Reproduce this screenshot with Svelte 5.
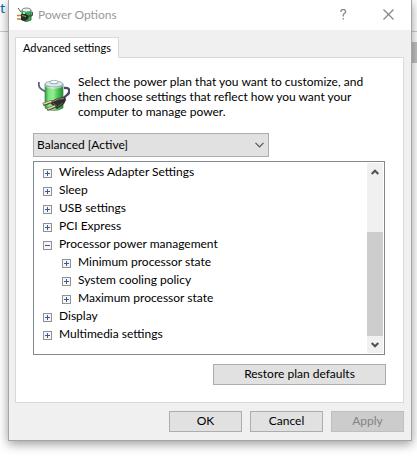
<script>
  let plan = "balanced"

  let settings = [
    { id: 0, text: "Wireless Adapter Settings", open: false, children: [] },
    { id: 1, text: "Sleep", open: false, children: [] },
    { id: 2, text: "USB settings", open: false, children: [] },
    { id: 3, text: "PCI Express", open: false, children: [] },
    { id: 4, text: "Processor power management", open: true, children: [
      "Minimum processor state",
      "System cooling policy",
      "Maximum processor state"
    ] },
    { id: 5, text: "Display", open: false, children: [] },
    { id: 6, text: "Multimedia settings", open: false, children: [] }
  ]

  const toggle = id => {
    settings = settings.map(item => item.id === id ? {...item, open: !item.open} : item)
  }
</script>

<div class="desktop">
  <div class="behind">
    <div class="behind-top"><a href="#settings">t s</a></div>
    <div class="behind-scroll"></div>
  </div>

  <div class="dialog" role="dialog" aria-labelledby="title">
    <header class="titlebar">
      <svg class="title-icon" viewBox="0 0 16 16" aria-hidden="true">
        <path d="M1 1 L4 5" stroke="#555" fill="none" />
        <path d="M5 3 V13 Q9 16 14 13 V3z" fill="#2fae45" stroke="#357a40" />
        <path d="M7 5 V12" stroke="#9cf0a2" stroke-width="2" />
        <ellipse cx="9.500" cy="3" rx="4.500" ry="2" fill="#e8f1ee" stroke="#7b8f87" />
        <path d="M12 9 Q17 9 15 5" stroke="#4a4a5a" stroke-width="1.500" fill="none" />
        <path d="M0 8.500 H5 M0 12 H5" stroke="#b98a2a" stroke-width="1.500" />
        <path d="M4 7 L9 7 L12 9 L11 12 L8 14 L4 13z" fill="#2b2b2b" />
        <path d="M5 8.500 L9 9.500" stroke="#9a9a9a" />
      </svg>
      <h1 id="title">Power Options</h1>
      <button class="caption" aria-label="Help">
        <svg width="7" height="11" viewBox="0 0 7 11">
          <path d="M1 3 V1.500 L2 .7 H4.500 L5.500 1.700 V3.500 L3.300 5.500 V7.500 M3.300 9 V10.500" fill="none" stroke="#888" stroke-width="1.300" />
        </svg>
      </button>
      <button class="caption" aria-label="Close">
        <svg width="11" height="11" viewBox="0 0 11 11">
          <path d="M.5 .5 L10.500 10.500 M10.500 .5 L.5 10.500" fill="none" stroke="#858585" stroke-width="1.200" />
        </svg>
      </button>
    </header>

    <main>
      <div class="tabs" role="tablist">
        <button class="tab" role="tab" aria-selected="true">Advanced settings</button>
      </div>

      <section class="panel">
        <div class="intro">
          <svg class="plan-icon" viewBox="0 0 32 34" aria-hidden="true">
            <defs>
              <linearGradient id="cell">
                <stop offset="0" stop-color="#2f9a3e" />
                <stop offset=".2" stop-color="#79e57d" />
                <stop offset=".45" stop-color="#9aec93" />
                <stop offset=".7" stop-color="#4bcb53" />
                <stop offset="1" stop-color="#238a32" />
              </linearGradient>
              <linearGradient id="cap">
                <stop offset="0" stop-color="#8ea1a4" />
                <stop offset=".4" stop-color="#fff" />
                <stop offset="1" stop-color="#8aa0a3" />
              </linearGradient>
            </defs>
            <path d="M1 3 C0 8 2 10 8 13" fill="none" stroke="#59607c" stroke-width="1.800" />
            <path d="M7 5 V29 Q16 34 25 29 V5z" fill="url(#cell)" stroke="#3e8250" stroke-width=".7" />
            <path d="M7 8 Q16 11 25 8 V5 H7z" fill="url(#cap)" />
            <ellipse cx="16" cy="5" rx="9" ry="3" fill="#dce9e9" stroke="#7d9396" stroke-width=".7" />
            <path d="M12 3 V4.500 Q16 6 20 4.500 V3z" fill="#9baeb0" />
            <ellipse cx="16" cy="3" rx="4" ry="1.700" fill="#f6ffff" stroke="#81979a" stroke-width=".6" />
            <path d="M26 9 C33 8 32 14 29 16 C27 18 26 18 25 20" fill="none" stroke="#48496b" stroke-width="2.400" />
            <path d="M13 25 L13 22 L20 19 L27 18 L28 21 L26 25 L19 30z" fill="#302d2b" />
            <path d="M14.500 22.500 L20.500 20 L26 19.500" fill="none" stroke="#8f8984" stroke-width="1.200" />
            <path d="M15 24 L19.500 27.500 L25 24" fill="none" stroke="#66615c" />
            <path d="M5 25.500 L14 22.500 M9 30.500 L18 27" stroke="#554a3d" stroke-width="3.400" />
            <path d="M5.500 25 L13.500 22.300 M9.500 30 L17 27" stroke="#e2d3b4" stroke-width="1.700" />
          </svg>
          <p>Select the power plan that you want to customize, and then choose settings that reflect how you want your computer to manage power.</p>
        </div>

        <div class="plan">
          <select aria-label="Power plan" bind:value={plan}>
            <option value="balanced">Balanced [Active]</option>
          </select>
          <svg class="arrow" width="9" height="6" viewBox="0 0 9 6" aria-hidden="true">
            <path d="M.5 .8 L4.500 4.800 L8.500 .8" fill="none" stroke="#555" stroke-width="1.200" />
          </svg>
        </div>

        <div class="tree-box">
          <ul class="tree">
            {#each settings as item (item.id)}
              <li>
                <div class="row">
                  <button class="toggle" class:open={item.open} aria-label={item.text} aria-expanded={item.open} on:click={() => toggle(item.id)}></button>
                  <span>{item.text}</span>
                </div>
                {#if item.open && item.children.length}
                  <ul class="children">
                    {#each item.children as child}
                      <li class="row">
                        <button class="toggle" aria-label={child}></button>
                        <span>{child}</span>
                      </li>
                    {/each}
                  </ul>
                {/if}
              </li>
            {/each}
          </ul>
          <div class="scrollbar">
            <button aria-label="Scroll up">
              <svg width="8" height="6" viewBox="0 0 8 6"><path d="M.7 5 L4 1.700 L7.300 5" /></svg>
            </button>
            <div class="thumb"></div>
            <button aria-label="Scroll down">
              <svg width="8" height="6" viewBox="0 0 8 6"><path d="M.7 1 L4 4.300 L7.300 1" /></svg>
            </button>
          </div>
        </div>

        <button class="push restore">Restore plan defaults</button>
      </section>

      <footer>
        <button class="push">OK</button>
        <button class="push">Cancel</button>
        <button class="push" disabled>Apply</button>
      </footer>
    </main>
  </div>
</div>

<style>
  :global(body) {
    background: #fff;
  }

  .desktop {
    position: relative;
    padding: 0 5px 16px 8px;
    overflow: hidden;
    font: 12px/15px "Segoe UI", Lato, "Open Sans", sans-serif;
    color: #000;
  }

  .desktop * {
    box-sizing: border-box;
  }

  button, select {
    font: inherit;
    color: inherit;
    margin: 0;
    padding: 0;
    border-radius: 0;
  }

  ul, p, h1 {
    margin: 0;
    padding: 0;
  }

  li {
    list-style: none;
  }

  /* the window that shows round the dialog's edges */
  .behind {
    position: absolute;
    inset: 0;
  }

  .behind-top {
    height: 32px;
    border-bottom: 1px solid #ccc;
  }

  .behind-top a {
    color: #0067b8;
    font-size: 14px;
    text-decoration: none;
  }

  .behind-scroll {
    width: 17px;
    height: 21px;
    margin: 10px 0 0 auto;
    background: #c2c2c2;
  }

  .dialog {
    position: relative;
    border: 1px solid #a5a5a5;
    border-top: 0;
    background: #f0f0f0;
    box-shadow: 0 3px 10px rgba(0, 0, 0, .4);
  }

  .titlebar {
    display: flex;
    align-items: center;
    height: 30px;
    padding-left: 8px;
    background: #fff;
  }

  .title-icon {
    width: 16px;
    height: 16px;
    margin-right: 5px;
  }

  h1 {
    flex: 1;
    padding-bottom: 2px;
    font-size: 12px;
    font-weight: normal;
    color: #999;
  }

  .caption {
    display: grid;
    place-items: center;
    width: 45px;
    height: 30px;
    padding-bottom: 2px;
    border: 0;
    background: none;
  }

  main {
    padding: 7px 7px 8px 6px;
  }

  .tabs {
    display: flex;
  }

  .tab {
    position: relative;
    height: 21px;
    margin-bottom: -1px;
    padding: 0 7px 2px;
    border: 1px solid #d9d9d9;
    border-bottom: 0;
    background: #fff;
    font-size: 11px;
  }

  .panel {
    padding: 16px 18px 17px 17px;
    border: 1px solid #d9d9d9;
    background: #fff;
  }

  .intro {
    display: flex;
    gap: 8px;
    padding-left: 5px;
  }

  .plan-icon {
    flex: none;
    width: 32px;
    height: 34px;
    margin-top: 5px;
  }

  .plan {
    position: relative;
    width: 67%;
    margin: 14px 0 4px;
  }

  select {
    display: block;
    width: 100%;
    height: 24px;
    padding: 0 3px 2px;
    border: 1px solid #adadad;
    background: #e1e1e1;
    appearance: none;
  }

  .arrow {
    position: absolute;
    right: 5px;
    top: 9px;
    pointer-events: none;
  }

  .tree-box {
    display: flex;
    justify-content: space-between;
    padding: 1px;
    border: 1px solid #828790;
  }

  .tree {
    padding: 0 0 10px 8px;
  }

  .row {
    display: flex;
    align-items: center;
    gap: 7px;
    height: 18px;
    padding-bottom: 2px;
  }

  .children {
    padding-left: 19px;
  }

  .toggle {
    width: 9px;
    height: 9px;
    margin-top: 4px;
    border: 1px solid #919191;
    background:
      linear-gradient(#3c5a9a, #3c5a9a) center / 5px 1px no-repeat,
      linear-gradient(#3c5a9a, #3c5a9a) center / 1px 5px no-repeat,
      #f6f6f6;
  }

  .toggle.open {
    background: linear-gradient(#3c5a9a, #3c5a9a) center / 5px 1px no-repeat, #f6f6f6;
  }

  .scrollbar {
    display: flex;
    flex-direction: column;
    width: 16px;
    background: #f0f0f0;
  }

  .scrollbar button {
    display: grid;
    place-items: center;
    height: 17px;
    border: 0;
    background: none;
  }

  .scrollbar path {
    fill: none;
    stroke: #505050;
    stroke-width: 2;
  }

  .thumb {
    height: 104px;
    margin-top: auto;
    background: #cdcdcd;
  }

  .push {
    width: 73px;
    height: 21px;
    padding-bottom: 2px;
    border: 1px solid #adadad;
    background: #e1e1e1;
  }

  .push:disabled {
    border-color: #bfbfbf;
    background: #ccc;
    color: #838383;
  }

  .restore {
    display: block;
    width: 173px;
    margin: 9px -1px 0 auto;
  }

  footer {
    display: flex;
    justify-content: flex-end;
    gap: 8px;
    margin-top: 8px;
  }
</style>
